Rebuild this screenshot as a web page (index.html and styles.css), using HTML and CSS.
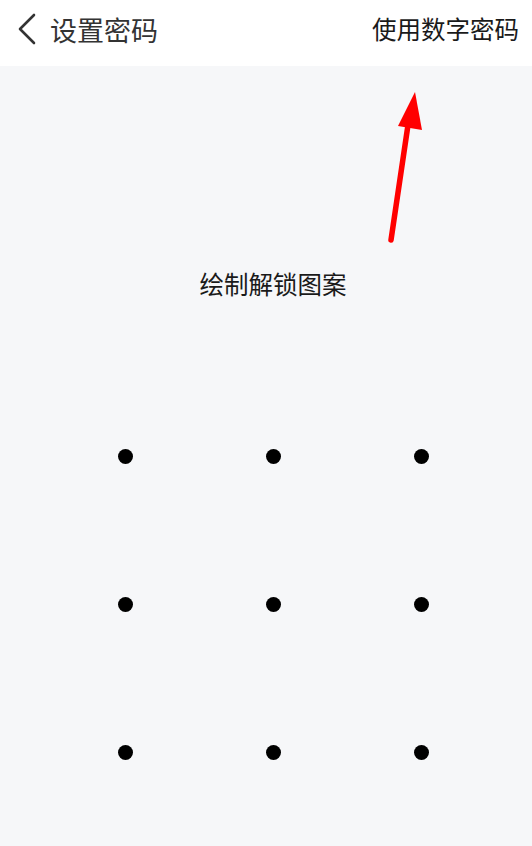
FILE: index.html
```
<!DOCTYPE html>
<html lang="zh">
<head>
<meta charset="utf-8">
<link rel="stylesheet" href="styles.css">
</head>
<body>
<header class="topbar">
  <div class="left">
    <svg class="back" width="20" height="32" viewBox="0 0 20 32"><polyline points="17,2 3,16 17,30" fill="none" stroke="#333" stroke-width="2.6" stroke-linecap="round" stroke-linejoin="round"/></svg>
    <span class="title">设置密码</span>
  </div>
  <span class="action">使用数字密码</span>
</header>
<main class="content">
  <p class="prompt">绘制解锁图案</p>
  <div class="grid">
    <span class="dot"></span><span class="dot"></span><span class="dot"></span>
    <span class="dot"></span><span class="dot"></span><span class="dot"></span>
    <span class="dot"></span><span class="dot"></span><span class="dot"></span>
  </div>
</main>
<svg class="arrow" width="532" height="260" viewBox="0 0 532 260">
  <line x1="391" y1="240" x2="408" y2="125" stroke="#ff0000" stroke-width="5.5" stroke-linecap="round"/>
  <polygon points="415,92 398,126 422,130" fill="#ff0000"/>
</svg>
</body>
</html>
```
FILE: styles.css
```
html, body {
  margin: 0;
  padding: 0;
}
body {
  width: 532px;
  height: 846px;
  background: #f6f7f9;
  font-family: "Noto Sans CJK SC", "Noto Sans", sans-serif;
  overflow: hidden;
  position: relative;
}
.topbar {
  height: 66px;
  background: #ffffff;
  display: flex;
  align-items: center;
  justify-content: space-between;
  padding: 0 13px 8px 17px;
  box-sizing: border-box;
}
.left {
  display: flex;
  align-items: center;
  gap: 13px;
}
.back {
  display: block;
}
.title {
  font-size: 27px;
  color: #333333;
  line-height: 1;
}
.action {
  font-size: 24.5px;
  color: #1a1a1a;
  line-height: 1;
}
.content {
  padding-left: 14px;
  display: flex;
  flex-direction: column;
  align-items: center;
}
.prompt {
  margin: 202px 0 0;
  font-size: 24.5px;
  line-height: 32px;
  color: #1a1a1a;
}
.grid {
  margin-top: 82px;
  display: grid;
  grid-template-columns: repeat(3, 148px);
  grid-template-rows: repeat(3, 148px);
  place-items: center;
}
.dot {
  width: 15px;
  height: 15px;
  border-radius: 50%;
  background: #000000;
}
.arrow {
  position: absolute;
  left: 0;
  top: 0;
}
```
